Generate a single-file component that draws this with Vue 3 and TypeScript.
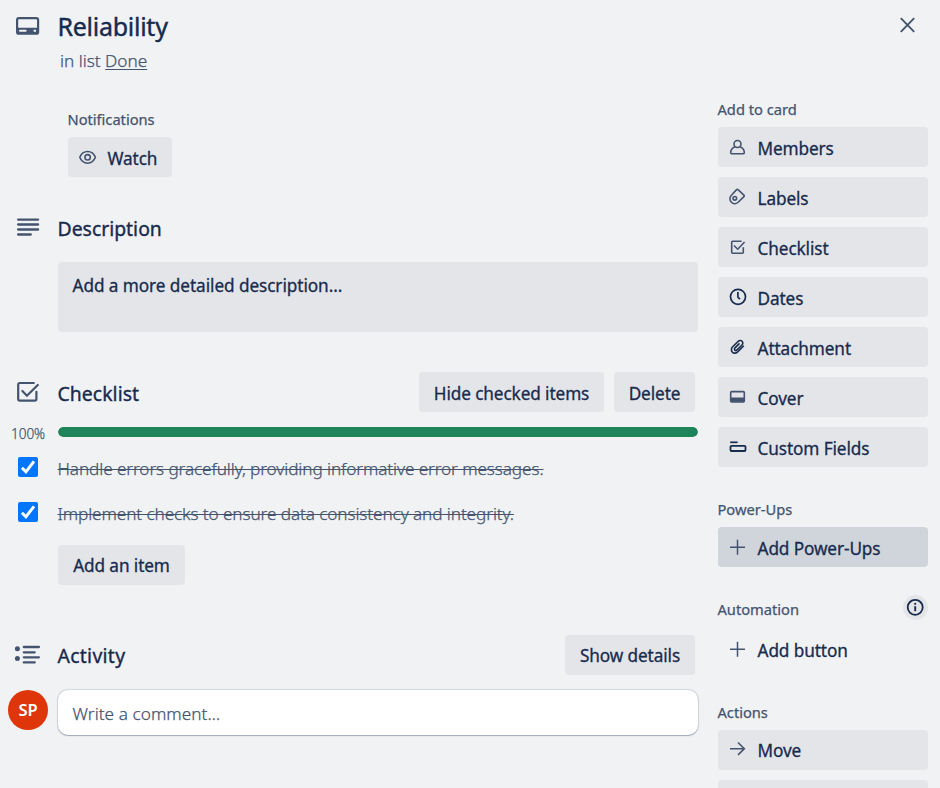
<script setup lang="ts">
import { ref } from 'vue'

interface SideItem {
  icon: string
  label: string
  variant?: 'strong' | 'plain'
}
interface SideGroup {
  title: string
  key: string
  info?: boolean
  items: SideItem[]
}

const groups: SideGroup[] = [
  {
    title: 'Add to card',
    key: 'add',
    items: [
      { icon: 'member', label: 'Members' },
      { icon: 'label', label: 'Labels' },
      { icon: 'check', label: 'Checklist' },
      { icon: 'clock', label: 'Dates' },
      { icon: 'clip', label: 'Attachment' },
      { icon: 'cover', label: 'Cover' },
      { icon: 'fields', label: 'Custom Fields' },
    ],
  },
  { title: 'Power-Ups', key: 'power', items: [{ icon: 'plus', label: 'Add Power-Ups', variant: 'strong' }] },
  { title: 'Automation', key: 'auto', info: true, items: [{ icon: 'plus', label: 'Add button', variant: 'plain' }] },
  { title: 'Actions', key: 'actions', items: [{ icon: 'arrow', label: 'Move' }, { icon: '', label: '' }] },
]

const checks = ref([
  { text: 'Handle errors gracefully, providing informative error messages.', done: true },
  { text: 'Implement checks to ensure data consistency and integrity.', done: true },
])
</script>

<template>
  <div class="card">
    <main class="main">
      <header class="row head">
        <svg class="big" viewBox="0 0 30 30">
          <rect x="4.1" y="7.1" width="21" height="15.6" rx="1.8" fill="none" stroke="currentColor" stroke-width="2.2" />
          <path fill="currentColor" fill-rule="evenodd" d="M4 16.8h21.4v6H4zM7 18.8a1 1 0 0 0 0 2h5.7a1 1 0 0 0 0-2zM20.6 18.8v2h2.4v-2z" />
        </svg>
        <h1>Reliability</h1>
        <button class="close" aria-label="Close">
          <svg viewBox="0 0 20 20"><path d="M3.8 3.2l13.4 13.6M17.2 3.2L3.8 16.8" fill="none" stroke="currentColor" stroke-width="1.9" /></svg>
        </button>
      </header>
      <p class="inlist">in list <a>Done</a></p>

      <section class="notif">
        <h3>Notifications</h3>
        <button class="btn watch">
          <svg class="ico" viewBox="0 0 20 20" fill="none" stroke="currentColor" stroke-width="1.6">
            <path d="M1.8 9.3C3.2 5.8 6.1 3.5 9.6 3.5s6.4 2.3 7.8 5.8c-1.4 3.6-4.3 5.9-7.8 5.9s-6.400-2.300-7.800-5.900z" />
            <circle cx="9.6" cy="9.3" r="2.7" />
          </svg>
          <span>Watch</span>
        </button>
      </section>

      <section class="desc">
        <div class="row">
          <svg class="big lines" viewBox="0 0 30 30">
            <path d="M5.1 7.6h20M5.1 12.5h20M5.1 17.5h20M5.1 22.5h12.7" />
          </svg>
          <h2 class="h-desc">Description</h2>
        </div>
        <div class="descbox">Add a more detailed description…</div>
      </section>

      <section class="checklist">
        <div class="row">
          <svg class="big" viewBox="0 0 30 30" fill="none" stroke="currentColor" stroke-width="2.2">
            <path d="M20.8 6H6.8a1.600 1.600 0 0 0-1.600 1.600v14.500a1.600 1.600 0 0 0 1.600 1.600h15a1.600 1.600 0 0 0 1.600-1.600v-7.300" stroke-linecap="round" />
            <path d="M9.4 14l4.5 4.7L24.8 8" stroke-linecap="round" />
          </svg>
          <h2 class="h-check">Checklist</h2>
          <div class="actions">
            <button class="btn hide"><span>Hide checked items</span></button>
            <button class="btn del"><span>Delete</span></button>
          </div>
        </div>
        <div class="progress">
          <span class="pct">100%</span>
          <div class="track"><div class="fill" :style="{ width: '100%' }"></div></div>
        </div>
        <div v-for="(c, i) in checks" :key="i" class="item" @click="c.done = !c.done">
          <span class="box">
            <svg v-if="c.done" viewBox="0 0 20 20"><path d="M3.9 10.8l4 4L16 4.3" fill="none" stroke="#fff" stroke-width="3" /></svg>
          </span>
          <span class="itext" :class="{ done: c.done }">{{ c.text }}</span>
        </div>
        <button class="btn additem"><span>Add an item</span></button>
      </section>

      <section class="activity">
        <div class="row">
          <svg class="big lines" viewBox="0 0 30 30">
            <path d="M10.8 7h15.1M10.8 12.3h10.9M10.8 17.3h15.1M10.8 22.4h10.9" />
            <circle cx="4.4" cy="8.7" r="2.5" />
            <circle cx="4.4" cy="18.6" r="2.5" />
          </svg>
          <h2 class="h-act">Activity</h2>
          <div class="actions"><button class="btn show"><span>Show details</span></button></div>
        </div>
        <div class="comment">
          <span class="avatar">SP</span>
          <div class="input">Write a comment…</div>
        </div>
      </section>
    </main>

    <aside class="side">
      <section v-for="g in groups" :key="g.key" class="group" :class="'g-' + g.key">
        <div class="gtitle">
          <h3>{{ g.title }}</h3>
          <span v-if="g.info" class="info">
            <svg viewBox="0 0 25 25">
              <circle cx="12.2" cy="12.3" r="7.5" fill="none" stroke="currentColor" stroke-width="1.8" />
              <path d="M12.2 11.2v5" stroke="currentColor" stroke-width="1.9" />
              <circle cx="12.2" cy="8.8" r="1.1" fill="currentColor" />
            </svg>
          </span>
        </div>
        <button v-for="(it, i) in g.items" :key="i" class="btn sbtn" :class="it.variant">
          <svg class="ico" :class="'i-' + it.icon" viewBox="0 0 20 20" fill="none" stroke="currentColor" stroke-width="1.6">
            <template v-if="it.icon === 'member'">
              <path d="M6.9 8.7C4.3 9.8 2.7 12 2.7 14.700c0 .6.400 1 1 1h11.600c.6 0 1-.4 1-1 0-2.700-1.600-4.900-4.200-6" />
              <circle cx="9.5" cy="6" r="3.5" />
            </template>
            <template v-else-if="it.icon === 'label'">
              <path d="M8.6 1.600c.5-.5 1-.5 1.500 0l5.800 5.500c.5.5.5 1 0 1.500l-5.500 5.400c-1.900 1.900-5 2.300-7 .3s-1.900-5.100 0-7z" />
              <circle cx="6.8" cy="10.300" r="1.800" />
            </template>
            <template v-else-if="it.icon === 'check'">
              <path d="M13.6 3.2H4.600a.9.9 0 0 0-.9.9v10.200a.9.9 0 0 0 .9.9h9.800a.9.9 0 0 0 .9-.9V9.300" />
              <path d="M6 7.500l3.700 3.700 6.900-7.200" />
            </template>
            <template v-else-if="it.icon === 'clock'">
              <circle cx="10" cy="8.800" r="7.500" stroke-width="1.700" />
              <path d="M9.900 4v4.600c0 .4.100.7.400 1l1.700 1.600" stroke-width="1.700" />
            </template>
            <template v-else-if="it.icon === 'clip'">
              <path d="M15.800 7.800l-5.900 5.900c-1.700 1.700-4.200 1.900-5.500.5-1.500-1.500-1.300-3.800.3-5.400l5.300-5.300c1.200-1.200 3-1.400 4.100-.3 1.100 1.100.9 2.800-.3 4L9 11.900c-.7.7-1.600.8-2.200.2-.6-.6-.5-1.500.2-2.200l4.500-4.500" stroke-width="1.600" />
            </template>
            <template v-else-if="it.icon === 'cover'">
              <rect x="2.700" y="3.600" width="13.600" height="10.400" rx="1" />
              <path d="M2.500 9.500h14v4.400h-14z" fill="currentColor" stroke="none" />
            </template>
            <template v-else-if="it.icon === 'fields'">
              <path d="M2.200 4.300h7.400" stroke-width="1.700" />
              <rect x="2.500" y="7.800" width="15" height="5.200" rx="1" stroke-width="1.800" />
            </template>
            <path v-else-if="it.icon === 'plus'" d="M9.500 1.700v15M2 9.200h15" stroke-width="1.500" />
            <path v-else-if="it.icon === 'arrow'" d="M2 8.700h14M10 2.500l6.300 6.200L10 14.900" stroke-width="1.600" />
          </svg>
          <span>{{ it.label }}</span>
        </button>
      </section>
    </aside>
  </div>
</template>

<style>
body {
  background: #f1f2f4;
  overflow: hidden;
}
</style>

<style scoped>
.card {
  display: grid;
  grid-template-columns: 698px 210px;
  column-gap: 20px;
  width: 940px;
  height: 788px;
  overflow: hidden;
  background: #f1f2f4;
  color: #172b4d;
  font-family: 'Noto Sans', 'Open Sans', sans-serif;
  font-size: 17.2px;
  letter-spacing: -0.07px;
  -webkit-text-stroke: 0.25px currentColor;
}
h1, h2, h3, p { margin: 0; }
h1 { font-size: 25px; font-weight: 400; line-height: 32px; letter-spacing: -0.27px; flex: 1; margin-left: -0.5px; -webkit-text-stroke-width: 0.4px; }
h2 { font-size: 19.4px; font-weight: 400; line-height: 24px; letter-spacing: 0; margin-left: -0.5px; -webkit-text-stroke-width: 0.35px; }
h3 { font-size: 14.7px; font-weight: 400; line-height: 20px; color: #44546f; letter-spacing: -0.02px; margin: -1px 0 0 -0.5px; }
.row {
  display: flex;
  align-items: center;
  padding-left: 13px;
  height: 40px;
}
.big { width: 30px; height: 30px; flex: none; margin-right: 15px; color: #44546f; }
.lines { fill: currentColor; }
.lines path { fill: none; stroke: currentColor; stroke-width: 2.3; stroke-linecap: round; }
.head { padding-top: 6px; position: relative; }
.close {
  position: absolute;
  left: 897px;
  top: 15px;
  width: 20px;
  height: 20px;
  padding: 0;
  border: 0;
  background: none;
  color: #44546f;
}
.close svg { display: block; }
.inlist { margin: 3px 0 0 60px; line-height: 24px; color: #44546f; font-weight: 300; letter-spacing: 0; }
.inlist a { text-decoration: underline; text-underline-offset: 2px; text-decoration-thickness: 1px; }
.notif { margin: 37px 0 0 68px; }
.notif h3 { margin-bottom: 8px; }
.btn {
  display: flex;
  align-items: center;
  justify-content: center;
  height: 40px;
  padding: 2px 0 0;
  border: 0;
  border-radius: 4px;
  background: #e4e5e9;
  color: #172b4d;
  font-family: inherit;
  font-size: 17.2px;
  font-weight: 400;
  letter-spacing: -0.1px;
  white-space: nowrap;
  -webkit-text-stroke: 0.3px currentColor;
}
.ico { width: 20px; height: 20px; flex: none; margin: -1px 9.5px 0 0; color: #44546f; }
.watch { width: 104px; justify-content: flex-start; padding-left: 10px; }
.desc { margin-top: 30px; }
.desc .row { height: 42px; }
.desc .big { margin-top: -3px; }
.desc h2 { padding-top: 2px; }
.descbox {
  margin: 13px 0 0 58px;
  height: 70px;
  box-sizing: border-box;
  padding: 12px 14.5px;
  border-radius: 4px;
  background: #e4e5e9;
  font-weight: 400;
  line-height: 24px;
  -webkit-text-stroke-width: 0.3px;
}
.checklist { margin-top: 40px; }
.actions { display: flex; gap: 10px; margin-left: auto; padding-right: 3px; }
.checklist .row h2 { padding-top: 3px; letter-spacing: 0.05px; }
.activity .row h2 { padding-top: 1px; letter-spacing: 0.3px; }
.hide { width: 185px; }
.del { width: 81px; }
.progress { display: flex; align-items: center; height: 20px; margin-top: 10px; }
.pct { width: 58px; padding-left: 11px; box-sizing: border-box; font-size: 13.6px; color: #44546f; font-weight: 300; padding-top: 2px; }
.track { flex: 1; height: 10px; border-radius: 5px; overflow: hidden; }
.fill { height: 100%; background: #1f845a; border-radius: 5px; }
.item { display: flex; height: 45px; padding-left: 18px; box-sizing: border-box; }
.progress + .item { margin-top: 15px; }
.box { width: 20px; height: 20px; background: #0075ff; border-radius: 2px; margin-right: 19.5px; flex: none; }
.box svg { display: block; }
.itext { line-height: 24px; color: #44546f; font-weight: 300; letter-spacing: -0.1px; white-space: nowrap; height: 24px; }
.itext.done { text-decoration: line-through; text-decoration-thickness: 1px; }
.additem { width: 127px; margin: -2px 0 0 58px; padding-top: 0; }
.activity { margin-top: 50px; }
.show { width: 130px; padding-top: 0; }
.comment { display: flex; margin-top: 15px; padding-left: 8px; }
.avatar {
  width: 40px; height: 40px; border-radius: 50%; background: #de350b; color: #fff;
  display: flex; align-items: center; justify-content: center; font-size: 16.5px; font-weight: 600;
  margin-right: 10px; padding-bottom: 1px; box-sizing: border-box;
  -webkit-text-stroke-width: 0;
}
.input {
  flex: 1; height: 45px; box-sizing: border-box; border-radius: 10px; background: #fff;
  padding: 12px 14.5px; line-height: 24px; color: #44546f; font-weight: 300; letter-spacing: 0.05px;
  box-shadow: 0 1px 1px rgba(9, 30, 66, 0.25), 0 0 1px 1px rgba(9, 30, 66, 0.13);
}
.side { padding-top: 100px; }
.gtitle { display: flex; height: 20px; justify-content: space-between; margin-bottom: 7px; }
.info { width: 25px; height: 25px; border-radius: 50%; background: #e4e5e9; margin-top: -5px; color: #172b4d; }
.info svg { display: block; }
.group { margin-bottom: 33px; }
.sbtn { width: 210px; justify-content: flex-start; padding-left: 10px; margin-bottom: 10px; }
.sbtn:last-child { margin-bottom: 0; }
.strong { background: #d0d4db; }
.plain { background: none; }
.g-auto { margin-bottom: 34px; }
.g-auto .gtitle { margin-bottom: 9px; }
.g-actions .sbtn { padding-top: 1px; }
.plain { padding-top: 3px; }
.i-clock, .i-clip, .i-fields { color: #172b4d; }
</style>
